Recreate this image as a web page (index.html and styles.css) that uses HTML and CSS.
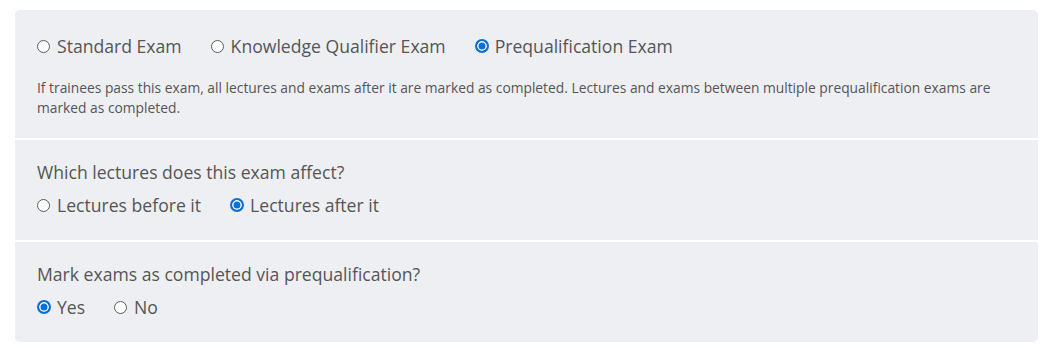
FILE: index.html
```html
<!DOCTYPE html>
<html>
<head>
<meta charset="utf-8">
<link rel="stylesheet" href="styles.css">
</head>
<body>
<div class="card">
  <div class="section first">
    <div class="radios">
      <label class="opt"><input type="radio" name="type"><span>Standard Exam</span></label>
      <label class="opt"><input type="radio" name="type"><span>Knowledge Qualifier Exam</span></label>
      <label class="opt"><input type="radio" name="type" checked><span>Prequalification Exam</span></label>
    </div>
    <p class="desc">If trainees pass this exam, all lectures and exams after it are marked as completed. Lectures and exams between multiple prequalification exams are marked as completed.</p>
  </div>
  <div class="section">
    <div class="question">Which lectures does this exam affect?</div>
    <div class="radios">
      <label class="opt"><input type="radio" name="lect"><span>Lectures before it</span></label>
      <label class="opt"><input type="radio" name="lect" checked><span>Lectures after it</span></label>
    </div>
  </div>
  <div class="section">
    <div class="question">Mark exams as completed via prequalification?</div>
    <div class="radios">
      <label class="opt"><input type="radio" name="mark" checked><span>Yes</span></label>
      <label class="opt"><input type="radio" name="mark"><span>No</span></label>
    </div>
  </div>
</div>
</body>
</html>
```
FILE: styles.css
```css
html, body {
  margin: 0;
  padding: 0;
  background: #ffffff;
}
body {
  padding: 10px 9px 0 15px;
  font-family: "Open Sans", "Liberation Sans", sans-serif;
  color: #555555;
}
.card {
  background: #eeeff3;
  border-radius: 5px;
  overflow: hidden;
}
.section {
  padding: 20px 22px 23px 22px;
  border-top: 2px solid #ffffff;
}
.section.first {
  border-top: none;
  padding-top: 24px;
  padding-bottom: 20px;
}
.radios {
  display: flex;
  gap: 29px;
  font-size: 17.6px;
  line-height: 24px;
}
.opt {
  display: flex;
  align-items: center;
  gap: 7px;
}
.opt input {
  appearance: none;
  -webkit-appearance: none;
  margin: 0;
  width: 13px;
  height: 13px;
  box-sizing: border-box;
  border: 1px solid #5a5a5a;
  border-radius: 50%;
  background: #ffffff;
  flex: none;
}
.opt input:checked {
  width: 14px;
  height: 14px;
  margin-right: -1px;
  border: 2px solid #0a6fd8;
  background: #0a6fd8;
  box-shadow: inset 0 0 0 1.5px #ffffff;
}
.question {
  font-size: 17.6px;
  line-height: 24px;
  margin-bottom: 9px;
}
.desc {
  margin: 20px 0 0 0;
  font-size: 13.8px;
  line-height: 20px;
}
```
